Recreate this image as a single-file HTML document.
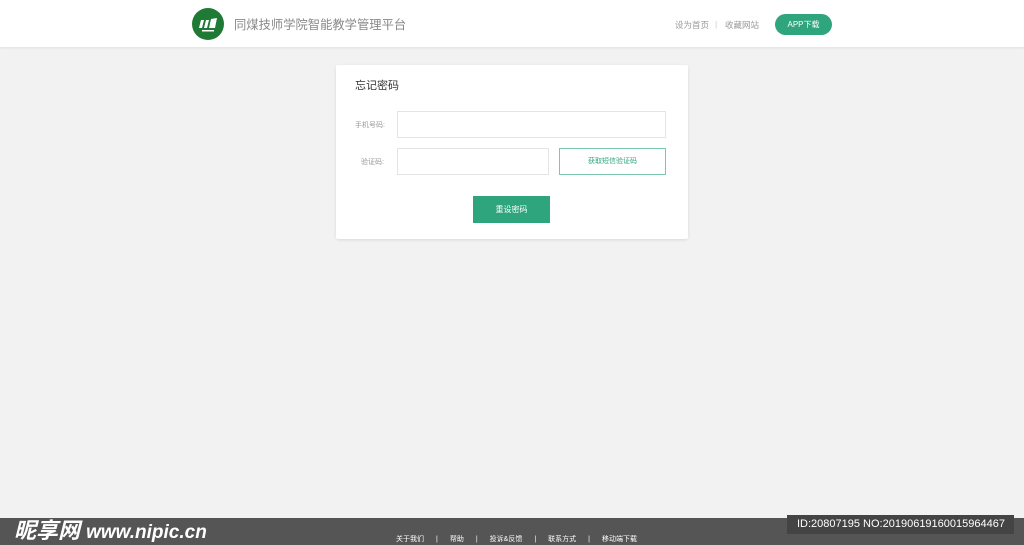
<!DOCTYPE html>
<html><head><meta charset="utf-8"><style>
*{margin:0;padding:0;box-sizing:border-box}
body{width:1024px;height:545px;background:#f2f2f2;font-family:"Liberation Sans","Noto Sans CJK SC",sans-serif;position:relative;overflow:hidden}
.hdr{position:absolute;left:0;top:0;width:1024px;height:47px;background:#fff;box-shadow:0 1px 3px rgba(0,0,0,.08)}
.logo{position:absolute;left:192px;top:8px;width:32px;height:32px;border-radius:50%;background:#1e7a34}
.title{position:absolute;left:234px;top:15px;font-size:12.3px;color:#888}
.nav{position:absolute;top:19px;font-size:8.5px;color:#999}
.app{position:absolute;left:775px;top:14px;width:57px;height:21px;border-radius:11px;background:#2fa57e;color:#fff;font-size:8px;text-align:center;line-height:21px}
.card{position:absolute;left:336px;top:65px;width:352px;height:174px;background:#fff;border-radius:2px;box-shadow:0 1px 3px rgba(0,0,0,.1)}
.h{position:absolute;left:19px;top:12px;font-size:11px;color:#333}
.lbl{position:absolute;font-size:7px;color:#999}
.inp{position:absolute;border:1px solid #e4e4e4;background:#fff}
.sms{position:absolute;left:223px;top:83px;width:107px;height:27px;border:1px solid #7cc8ac;color:#2fa57e;font-size:7px;text-align:center;line-height:25px}
.btn{position:absolute;left:137px;top:131px;width:77px;height:27px;background:#2fa57e;color:#fff;font-size:8px;text-align:center;line-height:27px}
.ft{position:absolute;left:0;top:518px;width:1024px;height:27px;background:#555}
.fl{position:absolute;top:534px;font-size:7px;color:#fff;white-space:nowrap;left:396px}
.fl span{margin:0 12px}
.wm{position:absolute;left:14px;top:513px;color:#fff;font-size:22px;font-weight:bold;font-style:italic}
.id{position:absolute;left:787px;top:515px;width:227px;height:19px;background:#444;color:#fff;font-size:11px;line-height:19px;padding-left:10px}
</style></head><body>
<div class="hdr">
<div class="logo"><svg width="32" height="32" viewBox="0 0 32 32"><path d="M7 20 L9 12 L12 12 L10 20Z M12 20 L14 12 L17 12 L15 20Z M17 20 L19 11 L25 10 L23 20Z" fill="#fff"/><rect x="10" y="22" width="12" height="1.5" fill="#fff"/></svg></div>
<div class="title">同煤技师学院智能教学管理平台</div>
<div class="nav" style="left:675px">设为首页</div>
<div class="nav" style="left:715px;color:#ccc">|</div>
<div class="nav" style="left:725px">收藏网站</div>
<div class="app">APP下载</div>
</div>
<div class="card">
<div class="h">忘记密码</div>
<div class="lbl" style="left:19px;top:55px">手机号码:</div>
<div class="inp" style="left:61px;top:46px;width:269px;height:27px"></div>
<div class="lbl" style="left:25px;top:92px">验证码:</div>
<div class="inp" style="left:61px;top:83px;width:152px;height:27px"></div>
<div class="sms">获取短信验证码</div>
<div class="btn">重设密码</div>
</div>
<div class="ft"></div>
<div class="wm">昵享网 <span style="font-size:19px">www.nipic.cn</span></div>
<div class="fl">关于我们<span>|</span>帮助<span>|</span>投诉&amp;反馈<span>|</span>联系方式<span>|</span>移动端下载</div>
<div class="id">ID:20807195 NO:20190619160015964467</div>
</body></html>
